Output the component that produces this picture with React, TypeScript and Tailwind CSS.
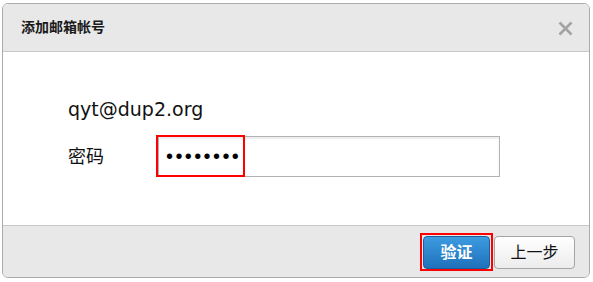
import React from "react";

const font = { fontFamily: '"DejaVu Sans", "Noto Sans CJK SC", sans-serif' };

export default function App() {
  return (
    <div
      className="w-[593px] h-[282px] bg-white pt-[3px] pl-[2px]"
      style={font}
    >
      <div className="w-[588px] h-[275px] border border-[#ababab] rounded-[6px] overflow-hidden flex flex-col bg-white">
        <div className="h-[48px] shrink-0 bg-[#e8e8e8] border-b border-[#c9c9c9] flex items-center justify-between pl-[18px] pr-[16px]">
          <span className="text-[14px] font-bold text-[#1a1a1a]">添加邮箱帐号</span>
          <svg width="15" height="15" viewBox="0 0 15 15" className="mt-[1px]">
            <path d="M1.5 1.5 L13.5 13.5 M13.5 1.5 L1.5 13.5" stroke="#a3a3a3" strokeWidth="2.6" strokeLinecap="butt" />
          </svg>
        </div>
        <div className="flex-1 bg-white pl-[65px] pt-[44px]">
          <div className="text-[19px] leading-[26px] text-[#111]">qyt@dup2.org</div>
          <div className="flex items-center mt-[14px]">
            <span className="w-[90px] text-[18px] text-[#111]">密码</span>
            <div className="relative">
              <input
                type="password"
                readOnly
                value="12345678"
                className="w-[342px] h-[41px] border border-[#b3b3b3] bg-white pl-[7px] text-[20px] tracking-[2.4px] text-black outline-none shadow-[inset_0_2px_2px_rgba(0,0,0,0.08)]"
                style={{ fontFamily: '"Liberation Sans", sans-serif' }}
              />
              <div className="absolute left-[-2px] top-[-1px] w-[89px] h-[42px] border-2 border-[#ff0000] pointer-events-none" />
            </div>
          </div>
        </div>
        <div className="h-[52px] shrink-0 bg-[#e8e8e8] border-t border-[#c9c9c9] flex items-start justify-end pt-[10px] pr-[14px] gap-[4px]">
          <div className="relative">
            <button className="w-[67px] h-[33px] rounded-[4px] border border-[#1b5f9e] bg-gradient-to-b from-[#3d9be0] to-[#1f72bb] text-white text-[16px] font-bold leading-none">
              验证
            </button>
            <div className="absolute left-[-3px] top-[-3px] w-[73px] h-[38px] border-2 border-[#ff0000] pointer-events-none" />
          </div>
          <button className="w-[81px] h-[33px] rounded-[4px] border border-[#a5a5a5] bg-gradient-to-b from-[#ffffff] to-[#ececec] text-[#111] text-[16px] leading-none">
            上一步
          </button>
        </div>
      </div>
    </div>
  );
}
